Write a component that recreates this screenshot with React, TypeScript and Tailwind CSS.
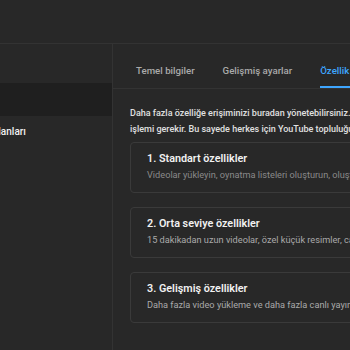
import React from 'react';

const features = [
  {
    title: '1. Standart özellikler',
    text: 'Videolar yükleyin, oynatma listeleri oluşturun, oluşturduğunuz içerikleri yönetin',
    muted: true,
  },
  {
    title: '2. Orta seviye özellikler',
    text: '15 dakikadan uzun videolar, özel küçük resimler, canlı yayınlar ve daha fazlası',
    muted: false,
  },
  {
    title: '3. Gelişmiş özellikler',
    text: 'Daha fazla video yükleme ve daha fazla canlı yayın hakkı, bağlantılar ve daha fazlası',
    muted: false,
  },
];

const tabs = ['Temel bilgiler', 'Gelişmiş ayarlar', 'Özellik uygunluğu'];

function FeatureCard({ title, text, muted }: { title: string; text: string; muted: boolean }) {
  return (
    <div className="h-[51px] rounded-[4px] border border-[#3a3a3a] pl-[16px] pt-[9px]">
      <p className="text-[10.8px] font-semibold leading-[14px] text-[#f1f1f1] whitespace-nowrap">{title}</p>
      <p
        className={
          'mt-[2px] text-[9.2px] leading-[14px] whitespace-nowrap ' +
          (muted ? 'text-[#8a8a8a]' : 'text-[#aaaaaa]')
        }
      >
        {text}
      </p>
    </div>
  );
}

export default function App() {
  return (
    <div
      className="flex h-[350px] w-[350px] flex-col overflow-hidden bg-[#282828]"
      style={{ fontFamily: 'Roboto, "Noto Sans", sans-serif' }}
    >
      <header className="h-[44px] shrink-0 border-b border-[#333333]" />
      <div className="flex flex-1">
        <aside className="w-[113px] shrink-0 border-r border-[#333333]">
          <div className="mt-[39px] h-[33px] bg-[#1f1f1f]" />
          <p className="-ml-[35px] mt-[8px] text-[10px] font-medium leading-[16px] text-[#f1f1f1] whitespace-nowrap">
            Kanal planları
          </p>
        </aside>
        <main className="w-[640px] shrink-0">
          <nav className="flex h-[45px] gap-[28px] border-b border-[#333333] pl-[23px]">
            {tabs.map((t, i) => (
              <div key={t} className="flex flex-col justify-end">
                <span
                  className={
                    'text-[9.7px] font-medium leading-[16px] whitespace-nowrap ' +
                    (i === 2 ? 'text-[#3ea6ff]' : 'text-[#aaaaaa]')
                  }
                >
                  {t}
                </span>
                <div className={'mt-[7px] h-[2px] ' + (i === 2 ? 'bg-[#3ea6ff]' : 'bg-transparent')} />
              </div>
            ))}
          </nav>
          <div className="pl-[17px] pt-[16px]">
            <p className="text-[9px] font-medium leading-[16px] text-[#e0e0e0] whitespace-nowrap">
              Daha fazla özelliğe erişiminizi buradan yönetebilirsiniz. Bazı özellikler için ek doğrulama
            </p>
            <p className="text-[9px] font-medium leading-[16px] text-[#e0e0e0] whitespace-nowrap">
              işlemi gerekir. Bu sayede herkes için YouTube topluluğunu güvende tutmamıza yardımcı olursunuz.
            </p>
            <div className="mt-[5px] flex flex-col gap-[14px]">
              {features.map((f) => (
                <FeatureCard key={f.title} {...f} />
              ))}
            </div>
          </div>
        </main>
      </div>
    </div>
  );
}
